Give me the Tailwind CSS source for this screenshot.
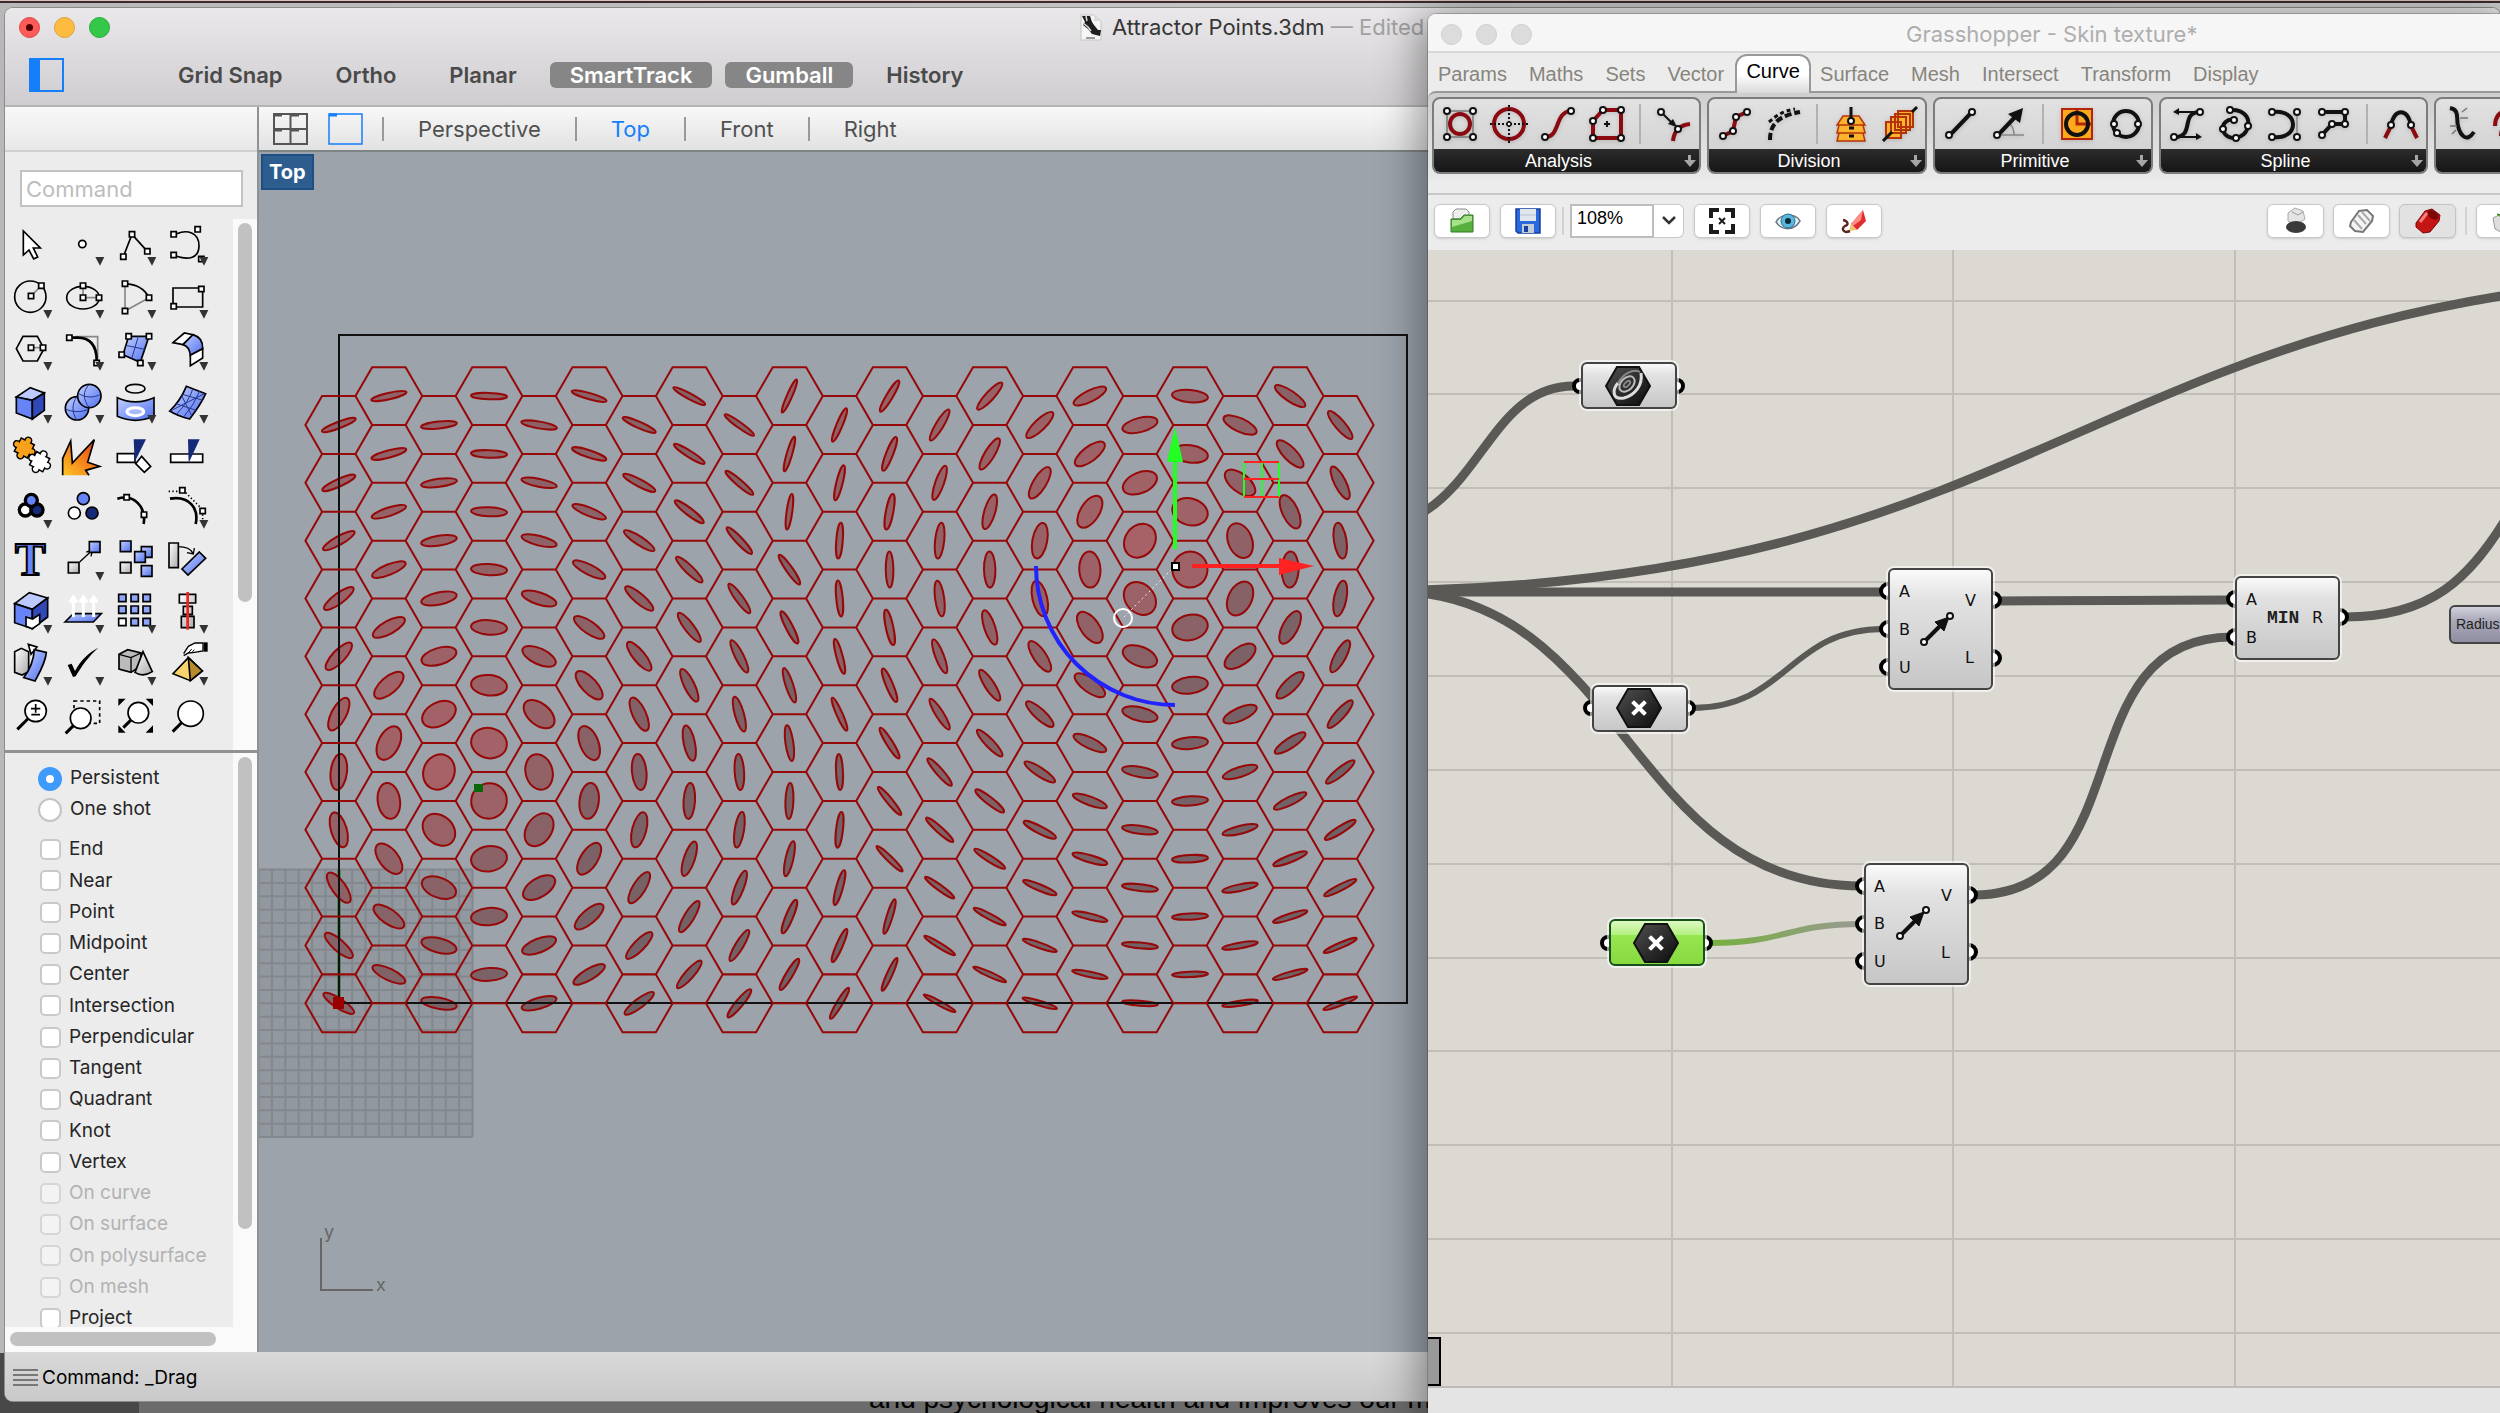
<!DOCTYPE html>
<html lang="en">
<head>
    <meta charset="UTF-8">
    <meta name="viewport" content="width=device-width, initial-scale=1.0">
    <title>Attractor Points.3dm</title>
    <script src="https://cdn.jsdelivr.net/npm/@tailwindcss/browser@4"></script>
</head>
<body class="relative h-screen overflow-hidden bg-[#666] font-['Inter',sans-serif] text-[#262626]">

    <!-- Shared gradients -->
    <svg class="absolute" width="0" height="0" aria-hidden="true">
        <defs>
            <linearGradient id="blue" x1="0" y1="0" x2="1" y2="1"><stop offset="0" stop-color="#c3d0ff"/><stop offset="1" stop-color="#4f70f0"/></linearGradient>
            <linearGradient id="grey" x1="0" y1="0" x2="1" y2="1"><stop offset="0" stop-color="#fff"/><stop offset="1" stop-color="#aaa"/></linearGradient>
            <linearGradient id="fire" x1="0" y1="1" x2="1" y2="0"><stop offset="0" stop-color="#ffc525"/><stop offset="1" stop-color="#e83a10"/></linearGradient>
            <linearGradient id="node" x1="0" y1="0" x2="0" y2="1"><stop offset="0" stop-color="#fbfbfb"/><stop offset=".25" stop-color="#e2e2e2"/><stop offset="1" stop-color="#c6c6c6"/></linearGradient>
            <linearGradient id="nodeGreen" x1="0" y1="0" x2="0" y2="1"><stop offset="0" stop-color="#e0fbc8"/><stop offset=".33" stop-color="#b4f080"/><stop offset=".34" stop-color="#96e650"/><stop offset="1" stop-color="#88d840"/></linearGradient>
            <linearGradient id="nodePurple" x1="0" y1="0" x2="0" y2="1"><stop offset="0" stop-color="#d4d3df"/><stop offset=".4" stop-color="#a9a8b8"/><stop offset="1" stop-color="#8f8ea2"/></linearGradient>
            <linearGradient id="wire" x1="1712" y1="0" x2="1860" y2="0" gradientUnits="userSpaceOnUse"><stop offset="0" stop-color="#76b03e"/><stop offset="1" stop-color="#999a93"/></linearGradient>
            <linearGradient id="hex" x1="0" y1="0" x2="1" y2="1"><stop offset="0" stop-color="#505050"/><stop offset="1" stop-color="#0c0c0c"/></linearGradient>
        </defs>
    </svg>

    <!-- Document behind -->
    <div class="absolute inset-0 flex flex-col justify-end bg-linear-to-r from-[#b8b8b8] to-[#d0d0d0]">
        <div class="absolute inset-x-0 top-0 h-[3px] border-b-2 border-[#3a2c2c] bg-[#dcc4bc]"></div>
        <div class="h-[60px] bg-[#484848] pl-[139px]">
            <p class="h-full overflow-hidden bg-[#6b6b6b] pt-[30px] pl-[730px] font-['Liberation_Sans',sans-serif] text-[28px] leading-8 whitespace-nowrap text-black">and psychological health and improves our mood</p>
        </div>
    </div>

    <!-- Rhino window -->
    <section class="absolute top-2 right-0 bottom-3 left-[5px] flex flex-col overflow-hidden rounded-lg bg-[#ececec] shadow-[0_0_0_1px_#8c8c8c]">
        <header class="flex h-[99px] shrink-0 flex-col border-b-2 border-[#b5b3b5] bg-linear-to-b from-[#eae8ea] to-[#cfcdcf]">
            <div class="flex h-[38px] items-center pl-[14px]">
                <div class="flex gap-[14px]">
                    <button aria-label="Close" class="flex size-[21px] items-center justify-center rounded-full border border-[#e0443e] bg-[#fc5b57]"><span class="size-[7px] rounded-full bg-[#4d0000]"></span></button>
                    <button aria-label="Minimise" class="size-[21px] rounded-full border border-[#dea033] bg-[#fdbc40]"></button>
                    <button aria-label="Zoom" class="size-[21px] rounded-full border border-[#27aa35] bg-[#34c84a]"></button>
                </div>
                <h1 class="ml-[970px] flex items-center gap-[10px] text-[22px] whitespace-nowrap text-[#363636]">
                    <svg class="h-[27px] w-[22px]" viewBox="0 0 22 27"><path d="M1 1h13l7 6v19H1z" fill="#f6f6f6" stroke="#c4c4c4"/><path d="M14 1l7 6h-7z" fill="#ddd"/><path d="M2 2h8l2 6 2 3 4 5 3 0-1 6-4-1-4-1-4-5-5-4 2-3z" fill="#1e1e1e"/><path d="M3 9l5 4 3 4M6 2l1 5" fill="none" stroke="#ddd" stroke-width="1.500"/><path d="M6 24h9" stroke="#999" stroke-width="2"/></svg>
                    <span>Attractor Points.3dm <span class="text-[#a3a1a3]">— Edited</span></span>
                </h1>
            </div>
            <div class="flex h-[58px] items-center pl-6">
                <button aria-label="Toggle sidebar" class="flex h-[34px] w-[35px] border-2 border-[#147efb]"><span class="h-full w-[9px] bg-[#147efb]"></span></button>
                <div class="ml-[94px] flex gap-[13px] text-[22px] leading-[26px] font-semibold text-[#4a4a4a]">
                    <button class="rounded-md px-5">Grid Snap</button>
                    <button class="rounded-md px-5">Ortho</button>
                    <button class="rounded-md px-5">Planar</button>
                    <button class="rounded-md bg-[#868686] px-5 text-white">SmartTrack</button>
                    <button class="rounded-md bg-[#868686] px-5 text-white">Gumball</button>
                    <button class="rounded-md px-5">History</button>
                </div>
            </div>
        </header>

        <div class="flex min-h-0 flex-1">
            <!-- Sidebar -->
            <aside class="flex w-[254px] shrink-0 flex-col border-r-2 border-[#8f9194]">
                <div class="h-[45px] shrink-0 border-b-2 border-[#d0d0d0] bg-linear-to-b from-[#f8f8f8] to-[#e8e8e8]"></div>
                <input type="text" aria-label="Command" placeholder="Command" class="mx-[15px] mt-[18px] mb-3 h-[37px] w-[223px] shrink-0 border-2 border-[#c2c2c2] bg-white px-1 text-[22px] placeholder:text-[#bdbdbd]">
                <div class="flex h-[534px] shrink-0 border-b-3 border-[#929292]">
                    <div id="tools" class="grid h-[525px] flex-1 grid-cols-[repeat(4,52px)] grid-rows-10 items-center pl-[2px]"></div>
                    <div class="w-6 bg-[#fafafa] px-[5px] py-1"><div class="h-[379px] rounded-full bg-[#c1c1c1]"></div></div>
                </div>
                <div class="flex min-h-0 flex-1">
                    <form class="flex-1 overflow-hidden pt-[10px] pl-[33px] text-[19px]">
                        <div class="grid h-[62px] grid-rows-2">
                            <label class="flex items-center gap-2"><input type="radio" name="mode" checked class="size-6 appearance-none rounded-full border-[8px] border-[#3f9bfb] bg-white">Persistent</label>
                            <label class="flex items-center gap-2"><input type="radio" name="mode" class="size-6 appearance-none rounded-full border-2 border-[#c4c4c4] bg-white">One shot</label>
                        </div>
                        <div id="snaps" class="mt-[9px] grid h-[500px] grid-rows-16 pl-[2px]"></div>
                    </form>
                    <div class="w-6 bg-[#fafafa] px-[5px] py-1"><div class="h-[472px] rounded-full bg-[#c1c1c1]"></div></div>
                </div>
                <div class="h-[25px] shrink-0 bg-[#fafafa] px-[5px] py-[5px]"><div class="h-[14px] w-[206px] rounded-full bg-[#c1c1c1]"></div></div>
            </aside>

            <!-- Viewport -->
            <main class="flex min-w-0 flex-1 flex-col">
                <nav class="flex h-[45px] shrink-0 items-center border-b-2 border-[#7f8486] bg-linear-to-b from-[#f8f8f8] to-[#e2e2e2] pl-[14px] text-[22px] text-[#505050]">
                    <button aria-label="Four views"><svg width="35" height="32" viewBox="0 0 35 32" fill="none" stroke="#555" stroke-width="2"><path d="M1 1h33v30H1zM17.500 1v30M1 16h33"/><path d="M1 2h8M18 2h8M1 17h8M18 17h8" stroke-width="3"/></svg></button>
                    <button aria-label="One view" class="ml-5"><svg width="35" height="32" viewBox="0 0 35 32" fill="none" stroke="#147efb" stroke-width="1.500"><path d="M1 1h33v30H1z"/><path d="M1 2h8" stroke-width="3"/></svg></button>
                    <div class="ml-[19px] flex items-center">
                        <button class="border-l-2 border-[#999] px-[34px] leading-6">Perspective</button>
                        <button class="border-l-2 border-[#999] px-[34px] leading-6 text-[#147efb]">Top</button>
                        <button class="border-l-2 border-[#999] px-[34px] leading-6">Front</button>
                        <button class="border-l-2 border-[#999] px-[34px] leading-6">Right</button>
                    </div>
                </nav>
                <div class="relative min-h-0 flex-1 bg-[#9ca3ab]">
                    <div class="absolute top-[2px] left-[2px] z-10 border-2 border-[#1d4f85] bg-[#2d5d8f] px-[6px] text-[20px] leading-8 font-bold text-white">Top</div>
                    <svg class="absolute inset-0 size-full overflow-hidden" fill="none">
                        <g transform="translate(-259 -152)">
                            <path d="M205 870h268v267H205z" fill="#92989f"/>
                            <path id="floor" stroke="#83888f" stroke-width="2"/>
                            <path d="M339 870v133" stroke="#1f7a1f" stroke-width="3"/>
                            <g id="ellipses" stroke="#970808" stroke-width="2"></g>
                            <path d="M339 335h1068v668H339z" stroke="#111" stroke-width="2"/>
                            <path id="hexes" stroke="#970808" stroke-width="2"/>
                            <path d="M333 997h11v12h-11z" fill="#900"/>
                            <path d="M474 784h9v8h-9z" fill="#086808"/>
                            <!-- Axes -->
                            <path d="M321 1238v52h52" stroke="#666" stroke-width="2"/>
                            <text x="324" y="1238" fill="#666" font-size="18">y</text>
                            <text x="376" y="1291" fill="#666" font-size="18">x</text>
                            <!-- Gumball -->
                            <path d="M1244 462v35M1262 462v35M1279 462v35" stroke="#2f2" stroke-width="2"/>
                            <path d="M1244 462h35M1244 479h35M1244 497h35" stroke="#f22" stroke-width="2"/>
                            <path d="M1036 566A139 139 0 0 0 1175 705" stroke="#22f" stroke-width="4"/>
                            <path d="M1175 549V440" stroke="#2f2" stroke-width="4"/><path d="M1175 427l8 35h-16z" fill="#2f2"/>
                            <path d="M1192 566h95" stroke="#f22" stroke-width="4"/><path d="M1314 566l-35-8v17z" fill="#f22"/>
                            <path d="M1175 566l-52 52" stroke="#eee" stroke-width="1" stroke-dasharray="2 3"/>
                            <circle cx="1123" cy="618" r="9" stroke="#fff" stroke-width="2"/>
                            <path d="M1172 563h7v7h-7z" fill="#fff" stroke="#000" stroke-width="2"/>
                        </g>
                    </svg>
                </div>
            </main>
        </div>
        <footer class="flex h-[49px] shrink-0 items-center gap-1 bg-linear-to-b from-[#d9d9d9] to-[#c9c9c9] pt-[3px] pl-2 text-[19px] text-black">
            <svg width="25" height="18" stroke="#777" stroke-width="2"><path d="M0 1h25M0 6h25M0 11h25M0 16h25"/></svg>
            Command: _Drag
        </footer>
    </section>

    <!-- Grasshopper window -->
    <section class="absolute top-[14px] right-0 bottom-0 left-[1428px] flex flex-col overflow-hidden rounded-tl-lg bg-[#ececec] font-['Liberation_Sans',sans-serif] shadow-[0_8px_44px_8px_rgba(0,0,0,0.4),0_0_0_1px_rgba(0,0,0,0.2)]">
        <header class="flex h-[39px] shrink-0 items-center border-b-2 border-[#d8d8d8] bg-[#f6f6f6] pt-[3px] pl-[13px]">
            <div class="flex gap-[14px]">
                <button aria-label="Close" class="size-[21px] rounded-full border border-[#cfcfcf] bg-[#dcdcdc]"></button>
                <button aria-label="Minimise" class="size-[21px] rounded-full border border-[#cfcfcf] bg-[#dcdcdc]"></button>
                <button aria-label="Zoom" class="size-[21px] rounded-full border border-[#cfcfcf] bg-[#dcdcdc]"></button>
            </div>
            <h2 class="ml-[374px] font-['Inter',sans-serif] text-[22px] whitespace-nowrap text-[#aeaeae]">Grasshopper - Skin texture*</h2>
        </header>
        <nav class="flex h-[38px] shrink-0 items-end pl-[10px] text-[20px] leading-[34px] text-[#87847c]">
            <button class="mr-[22px]">Params</button>
            <button class="mr-[22px]">Maths</button>
            <button class="mr-[22px]">Sets</button>
            <button class="mr-[11px]">Vector</button>
            <button class="relative z-10 -mb-[2px] h-[39px] w-[76px] rounded-t-xl border-2 border-b-0 border-[#999] bg-linear-to-b from-white from-50% to-[#dadada] pb-2 leading-6 text-black">Curve</button>
            <button class="mr-[22px] ml-[9px]">Surface</button>
            <button class="mr-[22px]">Mesh</button>
            <button class="mr-[22px]">Intersect</button>
            <button class="mr-[22px]">Transform</button>
            <button>Display</button>
        </nav>
        <div class="flex h-[104px] shrink-0 border-b-2 border-[#c8c8c8]">
            <div id="ribbon" class="flex h-[90px] flex-1 gap-[6px] rounded-tl-lg border-t-2 border-[#999] bg-linear-to-b from-[#cfcfcf] to-[#e9e9e9] pt-1 pl-1"></div>
        </div>
        <div class="flex h-[55px] shrink-0 items-center gap-[10px] pb-1 pl-[6px]">
            <button aria-label="Open" class="flex h-[34px] w-14 items-center justify-center rounded-md border border-[#c8c8c8] bg-white shadow-sm"><svg width="26" height="28" viewBox="0 0 26 28"><path d="M4 12V5l3-3h10l3 3v7z" fill="#eee" stroke="#888"/><path d="M2 12h9l4-4h9v17H2z" fill="#57b03c" stroke="#2f7a20"/><path d="M3 13h9l4-4h7v5L3 20z" fill="#a7e18c"/></svg></button>
            <button aria-label="Save" class="flex h-[34px] w-14 items-center justify-center rounded-md border border-[#c8c8c8] bg-white shadow-sm"><svg width="26" height="26" viewBox="0 0 26 26"><path d="M1 1h24v24H3l-2-2z" fill="#2b67dd" stroke="#123f9e" stroke-width="1.500"/><path d="M5 1h16v12H5z" fill="#dfe6ee"/><path d="M5 7h16" stroke="#b7c0cc"/><path d="M7 16h12v9H7z" fill="#c2cbd6"/><path d="M9 18h4v6H9z" fill="#16439f"/></svg></button>
            <div class="-mx-1 h-7 w-[2px] bg-[#d2d2d2]"></div>
            <div class="flex h-[34px]">
                <input type="text" aria-label="Zoom" value="108%" class="w-[84px] border-2 border-[#bdbdbd] bg-white pb-1 pl-[5px] text-[18px] text-black">
                <button aria-label="Zoom levels" class="flex w-[30px] items-center justify-center rounded-r-md border border-l-0 border-[#c8c8c8] bg-white"><svg width="14" height="9" fill="none" stroke="#333" stroke-width="2.500"><path d="M1 1l6 6 6-6"/></svg></button>
            </div>
            <button aria-label="Zoom extents" class="flex h-[34px] w-14 items-center justify-center rounded-md border border-[#c8c8c8] bg-white shadow-sm"><svg width="26" height="26" viewBox="0 0 26 26" fill="none" stroke="#1b1b1b" stroke-width="4"><path d="M2 10V2h8M16 2h8v8M24 16v8h-8M10 24H2v-8"/><path d="M10 10l6 6M16 10l-6 6" stroke-width="2"/></svg></button>
            <button aria-label="Named views" class="flex h-[34px] w-14 items-center justify-center rounded-md border border-[#c8c8c8] bg-white shadow-sm"><svg width="26" height="20" viewBox="0 0 26 20"><path d="M1 11C6 2 20 2 25 10 19 20 7 20 1 11z" fill="#e9f4f8" stroke="#6b7a80" stroke-width="1.500"/><circle cx="13" cy="10" r="7" fill="#59b6dc" stroke="#256f93"/><circle cx="13" cy="10" r="3" fill="#0a2836"/></svg></button>
            <button aria-label="Sketch" class="flex h-[34px] w-14 items-center justify-center rounded-md border border-[#c8c8c8] bg-white shadow-sm"><svg width="26" height="26" viewBox="0 0 26 26"><path d="M22 2l3 11-9 9-6-6z" fill="#e02c2c"/><path d="M22 2l-2 10-8 6-2-2z" fill="#ff8d88"/><path d="M10 16l6 6-8 1z" fill="#f3c070"/><path d="M9 23C2 26 0 20 4 18c4-1 3-5-2-6" fill="none" stroke="#5c2620" stroke-width="2.500"/></svg></button>
            <div class="-mr-[33px] ml-auto flex shrink-0 items-center gap-[9px]">
                <button aria-label="Wireframe preview" class="flex h-[34px] w-[57px] items-center justify-center rounded-md border border-[#c8c8c8] bg-white shadow-sm"><svg width="22" height="27" viewBox="0 0 22 27"><path d="M3 6l7-5 8 3 2 8-9 6-8-4z" fill="#e4e4e4" stroke="#aaa"/><path d="M7 5l6 3 5-3" fill="none" stroke="#999"/><ellipse cx="11" cy="20" rx="10" ry="6" fill="#3a3a3a"/></svg></button>
                <button aria-label="No preview" class="flex h-[34px] w-[57px] items-center justify-center rounded-md border border-[#c8c8c8] bg-white shadow-sm"><svg width="26" height="26" viewBox="0 0 26 26" fill="#f4f4f4" stroke="#777" stroke-width="2"><path d="M2 14L10 3l8-1 6 6-1 5-9 11-8-1-5-5z"/><path d="M9 7l8 9M13 4l8 9M5 12l8 9" stroke="#aaa"/></svg></button>
                <button aria-label="Shaded preview" class="flex h-[34px] w-[57px] items-center justify-center rounded-md border border-[#c4c4c4] bg-[#e2e2e2] shadow-sm"><svg width="26" height="26" viewBox="0 0 26 26"><path d="M1 15L10 3l7-2 8 6-1 6-9 11-7 1-7-6z" fill="#c51414" stroke="#7c0808"/><ellipse cx="18" cy="7" rx="6" ry="4" transform="rotate(35 18 7)" fill="#7c0808"/><path d="M5 14l7-9" stroke="#f28080" stroke-width="3"/></svg></button>
                <div class="h-7 w-[2px] bg-[#d2d2d2]"></div>
                <button aria-label="Preview selected" class="flex h-[34px] w-[57px] items-center justify-center rounded-md border border-[#c8c8c8] bg-white shadow-sm"><svg width="28" height="26" viewBox="0 0 28 26"><path d="M2 10l8-4 12 6-2 10-8 3-8-4z" fill="#ddd" stroke="#999"/><path d="M6 6l8 2 10-5-6 12z" fill="#84d334" stroke="#3f7d10"/></svg></button>
            </div>
        </div>

        <!-- Definition canvas -->
        <div class="relative min-h-0 flex-1 border-b-2 border-[#bdbcb8] bg-[#dcd9d2]">
            <svg class="absolute inset-0 size-full overflow-hidden" fill="none" aria-label="Definition">
                <g transform="translate(-1428 -250)">
                    <path d="M1672 240v1150M1953 240v1150M2235 240v1150M1428 301h1400M1428 394h1400M1428 488h1400M1428 582h1400M1428 676h1400M1428 770h1400M1428 864h1400M1428 958h1400M1428 1051h1400M1428 1145h1400M1428 1239h1400M1428 1333h1400" stroke="#c1beb8" stroke-width="2"/>

                    <!-- Wires -->
                    <g stroke="#5a5955" stroke-width="9">
                        <path d="M1364 528C1480 528 1480 386 1574 386"/>
                        <path d="M1355 591C2080 591 2080 273 2805 273"/>
                        <path d="M1400 592H1884"/>
                        <path d="M1390 591C1626 591 1626 886 1862 886"/>
                        <path d="M1998 601C2115 601 2115 600 2232 600"/>
                        <path d="M1974 895C2143 895 2063 637 2232 637"/>
                        <path d="M2345 617C2430 617 2470 580 2510 512"/>
                        <path d="M1692 708C1788 708 1788 629 1884 629" stroke-width="6"/>
                        <path d="M1710 943C1786 943 1786 924 1862 924" stroke="url(#wire)" stroke-width="6"/>
                    </g>

                    <!-- Grips -->
                    <g fill="#fff" stroke="#000" stroke-width="4">
                        <circle cx="1580" cy="386" r="6"/><circle cx="1677" cy="386" r="6"/>
                        <circle cx="1591" cy="708" r="6"/><circle cx="1688" cy="708" r="6"/>
                        <circle cx="1608" cy="943" r="6"/><circle cx="1705" cy="943" r="6"/>
                        <circle cx="1888" cy="591" r="7"/><circle cx="1888" cy="629" r="7"/><circle cx="1888" cy="667" r="7"/>
                        <circle cx="1993" cy="600" r="7"/><circle cx="1993" cy="658" r="7"/>
                        <circle cx="2235" cy="599" r="7"/><circle cx="2235" cy="637" r="7"/><circle cx="2340" cy="617" r="7"/>
                        <circle cx="1864" cy="886" r="7"/><circle cx="1864" cy="924" r="7"/><circle cx="1864" cy="961" r="7"/>
                        <circle cx="1969" cy="895" r="7"/><circle cx="1969" cy="952" r="7"/>
                    </g>

                    <!-- Bodies -->
                    <g stroke="#fff" stroke-opacity=".6" stroke-width="6">
                        <rect x="1582" y="363" width="94" height="45" rx="5"/><rect x="1593" y="686" width="94" height="45" rx="5"/><rect x="1610" y="920" width="94" height="45" rx="5"/>
                        <rect x="1889" y="569" width="103" height="120" rx="5"/><rect x="2236" y="577" width="103" height="82" rx="5"/><rect x="1865" y="864" width="103" height="120" rx="5"/>
                    </g>
                    <g fill="url(#node)" stroke="#444" stroke-width="2">
                        <rect x="1582" y="363" width="94" height="45" rx="5"/>
                        <rect x="1593" y="686" width="94" height="45" rx="5"/>
                        <rect x="1610" y="920" width="94" height="45" rx="5" fill="url(#nodeGreen)" stroke="#16501a"/>
                        <rect x="1889" y="569" width="103" height="120" rx="5"/>
                        <rect x="2236" y="577" width="103" height="82" rx="5"/>
                        <rect x="1865" y="864" width="103" height="120" rx="5"/>
                        <rect x="2450" y="606" width="120" height="37" rx="5" fill="url(#nodePurple)"/>
                        <path d="M1420 1338h20v47h-20z" fill="#999" stroke="#000"/>
                    </g>

                    <!-- Hexagon parameter icons -->
                    <g fill="url(#hex)" stroke="#111" stroke-width="2">
                        <path d="M1617 367h22l11 19-11 19h-22l-11-19z"/>
                        <path d="M1628 689h22l11 19-11 19h-22l-11-19z"/>
                        <path d="M1645 924h22l11 19-11 19h-22l-11-19z"/>
                    </g>
                    <g stroke="#ddd">
                        <path d="M1641 373c2 12-6 22-17 25-12 2-12-8-6-15" stroke-width="3"/>
                        <path d="M1618 383c5-9 15-15 22-11" stroke="#888" stroke-width="2"/>
                        <ellipse cx="1627" cy="384" rx="9" ry="6" transform="rotate(-45 1627 384)" stroke="#bbb" stroke-width="2"/>
                        <ellipse cx="1627" cy="384" rx="4" ry="2" transform="rotate(-45 1627 384)" stroke="#888" stroke-width="2"/>
                    </g>
                    <path d="M1634 703l10 10M1644 703l-10 10M1651 938l10 10M1661 938l-10 10" stroke="#fff" stroke-width="4" stroke-linecap="square"/>

                    <!-- Vector icons -->
                    <g stroke="#111" stroke-width="4">
                        <path d="M1925 641l17-17M1901 935l17-17"/>
                        <path d="M1949 617l-5 14-9-9zM1924 912l-5 14-9-9z" fill="#111" stroke-width="1"/>
                        <g fill="#fff" stroke-width="2"><circle cx="1924" cy="642" r="3"/><circle cx="1950" cy="616" r="3"/><circle cx="1900" cy="936" r="3"/><circle cx="1926" cy="910" r="3"/></g>
                    </g>

                    <g fill="#111" font-size="16" font-family="DejaVu Sans, sans-serif">
                        <text x="1899" y="597">A</text><text x="1899" y="635">B</text><text x="1899" y="673">U</text><text x="1965" y="606">V</text><text x="1965" y="663">L</text>
                        <text x="2246" y="605">A</text><text x="2246" y="643">B</text><text x="2312" y="623">R</text>
                        <text x="1874" y="892">A</text><text x="1874" y="929">B</text><text x="1874" y="967">U</text><text x="1941" y="901">V</text><text x="1941" y="958">L</text>
                    </g>
                    <text x="2267" y="623" fill="#222" font-size="18" font-weight="700" font-family="Liberation Mono, monospace">MIN</text>
                    <text x="2456" y="629" fill="#222" font-size="14" font-family="Liberation Sans, sans-serif">Radius</text>
                </g>
            </svg>
        </div>
        <footer class="h-[25px] shrink-0 bg-[#e4e4e4]"></footer>
    </section>

    <script>
        // Sidebar tool icons, drawn on a 156 x 156 box
        const sq = (x, y) => `<path d="M${x - 8} ${y - 8}h16v16h-16z" fill="#fff"/>`;
        const box = (x, y, s, f) => `<path d="M${x - s / 2} ${y - s / 2}h${s}v${s}h${-s}z" fill="${f}"/>`;
        const lens = (x, y, r, hx, hy) => `<path d="M${x - r * .7} ${y + r * .7}L${hx} ${hy}" stroke-width="9"/><circle cx="${x}" cy="${y}" r="${r}" fill="#fff"/>`;
        const piece = (x, y, f) => {
            const shape = `<path d="M${x - 20} ${y - 20}h40v40h-40z"/><circle cx="${x}" cy="${y - 25}" r="8"/><circle cx="${x - 25}" cy="${y}" r="8"/><circle cx="${x}" cy="${y + 25}" r="8"/><circle cx="${x + 25}" cy="${y}" r="8"/>`;
            return `<g transform="rotate(28 ${x} ${y})"><g stroke-width="9">${shape}</g><g fill="${f}" stroke="none">${shape}</g></g>`;
        };
        const tools = [
            ['Select', '<path d="M49 36v72l17-15 14 27 12-6-13-27h21z" fill="#fff"/>', 0],
            ['Point', '<circle cx="70" cy="75" r="11" fill="#fff"/>', 1],
            ['Polyline', '<path d="M37 113L63 46l46 51"/>' + sq(37, 113) + sq(63, 46) + sq(109, 97), 1],
            ['Curve', '<path d="M41 44C71 32 108 38 108 80s-37 42-67 32"/>' + sq(32, 46) + sq(104, 31) + sq(32, 108) + sq(115, 120), 1],
            ['Circle', '<circle cx="70" cy="74" r="47"/><path d="M72 72l31-31" stroke="#888"/>' + sq(72, 72) + sq(103, 41), 1],
            ['Ellipse', '<ellipse cx="72" cy="77" rx="49" ry="34"/><path d="M72 41v36h48" stroke="#888"/>' + sq(72, 41) + sq(72, 77) + sq(120, 77), 1],
            ['Arc', '<path d="M42 35v82l72-40" stroke="#888"/><path d="M42 35Q95 38 114 77"/>' + sq(42, 35) + sq(114, 77) + sq(42, 117), 1],
            ['Rectangle', '<path d="M30 48h89v57H30z"/>' + sq(115, 51) + sq(32, 103), 1],
            ['Polygon', '<path d="M48 37h43l20 37-20 37H48L28 74z"/><path d="M72 71h36" stroke="#888"/>' + sq(72, 71) + sq(108, 71), 1],
            ['Fillet', '<path d="M50 38h66v70" stroke="#888"/><path d="M40 41h15C95 41 113 66 113 110" stroke-width="8"/>' + sq(31, 41) + sq(113, 117), 1],
            ['Surface from points', '<path d="M53 37h61L88 115 36 92z" fill="url(#blue)"/><path d="M82 37L62 104M44 64l58 12" stroke="#24358c" stroke-width="3"/>' + sq(53, 37) + sq(114, 37) + sq(88, 117) + sq(32, 92), 1],
            ['Sweep', '<path d="M30 56l34-29 26 5-30 30z" fill="#fff"/><path d="M90 32c20 6 30 22 29 42L82 94C80 76 74 66 60 62z" fill="url(#blue)"/><path d="M119 74v28l-37 23V94z" fill="#fff"/>', 1],
            ['Box', '<path d="M28 60l42-28 42 16-36 22z" fill="#bccaff"/><path d="M28 60l48 10v56l-48-18z" fill="#6684f8"/><path d="M76 70l36-22v52l-36 26z" fill="#3048b8"/>', 1],
            ['Boolean union', '<circle cx="54" cy="94" r="35" fill="url(#blue)"/><circle cx="91" cy="57" r="35" fill="url(#blue)"/><path d="M91 22c-20 20-20 45 0 70M57 48c20 14 45 16 68 4M54 59c-16 20-16 50 0 70M20 96c20 10 45 10 66 2" stroke="#24358c" stroke-width="3"/>', 1],
            ['Project curve', '<ellipse cx="73" cy="35" rx="29" ry="13"/><path d="M19 62q54 25 110 0v56q-56 24-110 0z" fill="url(#blue)"/><ellipse cx="73" cy="104" rx="25" ry="12" fill="#a9bafa" stroke="#fff" stroke-width="9"/>', 1],
            ['Surface grid', '<path d="M70 28q30 12 58 22-14 32-48 76-34-8-60-24 32-30 50-74z" fill="url(#blue)"/><path d="M90 34Q78 74 40 112M110 42Q92 86 62 120M58 52l62 18M38 80l62 20M22 102L124 50M56 56l30 60" stroke="#24358c" stroke-width="3"/>', 1],
            ['Join', piece(52, 57, '#f9a11b') + piece(98, 98, '#fff'), 0],
            ['Explode', '<path d="M11 139V88l24-52 5 66 66-70-20 68 36 12-42 12 10 15" fill="url(#fire)"/>', 0],
            ['Trim', '<path d="M19 74h53v26H19zM74 104l18-22 27 30-19 18z" fill="#fff"/><path d="M68 31h37L71 99z" fill="#142a78" stroke="none"/>', 0],
            ['Split', '<path d="M23 75h96v25H23z" fill="#fff"/><path d="M75 31h35L77 102z" fill="#142a78" stroke="none"/>', 0],
            ['Group', '<g stroke-width="10"><circle cx="55" cy="84" r="18" fill="#fff"/><circle cx="90" cy="84" r="18" fill="#142a78"/><circle cx="73" cy="55" r="18" fill="#6684f8"/></g>', 1],
            ['Ungroup', '<circle cx="73" cy="50" r="18" fill="#6684f8"/><circle cx="46" cy="93" r="18" fill="#fff"/><circle cx="99" cy="93" r="18" fill="#142a78"/>', 0],
            ['Edit points', '<path d="M19 50C70 35 106 75 98 126" stroke-width="8"/>' + sq(47, 46) + sq(99, 98), 0],
            ['Control points', '<path d="M21 50C80 40 108 80 98 126" stroke-width="8"/><path d="M17 28h34M68 32l46 46M119 97v20" stroke-dasharray="4 7"/>' + sq(58, 25) + sq(119, 87), 1],
            ['Text', '<text x="24" y="122" font-family="Liberation Serif, serif" font-weight="700" font-size="138" fill="#6684f8" stroke-width="6">T</text>', 0],
            ['Move', '<path d="M62 84l36-34M82 54l18-5-4 18" stroke-width="4"/>' + box(44, 101, 32, 'url(#grey)') + box(107, 39, 32, 'url(#blue)'), 1],
            ['Copy', box(44, 37, 32, 'url(#blue)') + box(107, 54, 32, 'url(#blue)') + box(87, 69, 32, 'url(#blue)') + box(44, 101, 32, 'url(#grey)') + box(107, 111, 32, 'url(#blue)'), 0],
            ['Rotate', '<path d="M18 27h28v74H18z" fill="url(#grey)"/><path d="M109 54l19 19-53 50-18-18z" fill="url(#blue)"/><path d="M46 38q34 0 44 20M94 42l-3 18-19-4" stroke-width="4"/>', 0],
            ['Solid tools', '<path d="M23 50l44-33 55 16-46 34z" fill="#bccaff"/><path d="M23 50l53 17v58l-53-18z" fill="#6684f8"/><path d="M76 67l46-34v57l-46 35z" fill="#3048b8"/><path d="M57 90l20 6 21-14v28l-22 15-19-7z" fill="#fff"/>', 1],
            ['Extrude', '<path d="M18 105l25-25h84l-24 25z" fill="url(#blue)"/><path d="M43 90V34M73 90V34M104 90V34M32 46l11-16 11 16M62 46l11-16 11 16M93 46l11-16 11 16" stroke="#fff" stroke-width="9"/>', 1],
            ['Array', [33, 68, 105].map(y => [34, 71, 107].map(x => box(x, y, 22, x === 34 && y === 105 ? '#fff' : '#8ea6fa')).join('')).join(''), 1],
            ['Align', '<path d="M49 22h49v26H49zM61 58h27v24H61zM55 88h38v34H55z" fill="url(#grey)"/><path d="M74 15v113" stroke="#e22" stroke-width="8"/>', 1],
            ['Flow', '<path d="M23 38l20-10 22 10v60l-20 10-22-8z" fill="url(#grey)"/><path d="M64 16l26 8-18 22z" fill="#fff"/><path d="M82 32l36 8c-2 30-20 60-34 86l-34-10c20-26 30-50 32-84z" fill="url(#blue)"/>', 1],
            ['Check', '<path d="M26 78l12-4 10 22C66 62 90 40 118 26 90 50 66 84 50 112l-8 2z" fill="#000" stroke="none"/>', 1],
            ['Render', '<path d="M24 46l26-14 40 10v38l-30 20-36-10z" fill="#bbb"/><path d="M24 46l36 10 30-14M60 56v44" stroke-width="4"/><path d="M96 38L72 100q24 16 52-2z" fill="url(#grey)"/>', 1],
            ['Details', '<path d="M76 56l42 40-36 29-52-21z" fill="#f6d36c"/><path d="M76 56l6 69 36-29z" fill="#b98a2c"/><path d="M62 44l14-22 20-10h24v24l-26 4-18 2-14 8" fill="#fff" stroke-width="4"/><path d="M128 10v28" stroke-width="12"/><path d="M76 42l10-12M86 42l8-10" stroke-width="3"/>', 1],
            ['Zoom dynamic', lens(86, 57, 32, 31, 112) + '<path d="M72 50h28M86 36v26M73 68h26"/>', 0],
            ['Zoom window', '<path d="M45 27h77v67H45z" stroke-dasharray="10 9"/>' + lens(65, 79, 31, 20, 124), 0],
            ['Zoom extents', '<path d="M22 20h22L22 42zM126 20v22l-22-22zM126 122h-22l22-22zM22 122v-22l22 22z" fill="#000" stroke="none"/>' + lens(82, 62, 31, 37, 107), 0],
            ['Zoom selected', lens(83, 65, 38, 29, 119), 0],
        ];
        document.getElementById('tools').innerHTML = tools.map(([name, art, menu]) => `
            <button aria-label="${name}" class="size-[52px]"><svg class="size-full" viewBox="0 0 156 156" fill="none" stroke="#000" stroke-width="5">${art}${menu ? '<path d="M109 114h27l-13 26z" fill="#333" stroke="none"/>' : ''}</svg></button>`).join('');

        // Object snaps
        const snaps = ['End', 'Near', 'Point', 'Midpoint', 'Center', 'Intersection', 'Perpendicular', 'Tangent', 'Quadrant', 'Knot', 'Vertex', 'On curve', 'On surface', 'On polysurface', 'On mesh', 'Project'];
        document.getElementById('snaps').innerHTML = snaps.map(s => `
            <label class="flex items-center gap-2 whitespace-nowrap has-disabled:text-[#b2b2b2]"><input type="checkbox" ${s.startsWith('On ') ? 'disabled' : ''} class="size-[21px] shrink-0 appearance-none rounded-[5px] border-2 border-[#c9c9c9] bg-white disabled:border-[#d6d6d6] disabled:bg-[#f3f3f3]">${s}</label>`).join('');

        // Ribbon groups, icons on a 48 x 48 box, '|' is a divider
        const dot = (x, y) => `<circle cx="${x}" cy="${y}" r="3" fill="#fff" stroke="#111" stroke-width="2"/>`;
        const red = 'stroke="#8b0a0f"';
        const ribbon = [
            ['Analysis', [
                `<path d="M11 11h26v26H11z" stroke="#777" stroke-width="1.500"/><circle cx="24" cy="24" r="10" ${red}/>` + dot(11, 11) + dot(37, 11) + dot(11, 37) + dot(37, 37),
                `<circle cx="24" cy="24" r="15" ${red}/><path d="M5 24h38M24 5v38" stroke-width="2" stroke-dasharray="2 2"/><circle cx="24" cy="24" r="2" fill="#fff" stroke-width="1.500"/>`,
                `<path d="M11 37c16 0 9-25 26-26" ${red}/>` + dot(11, 37) + dot(37, 11),
                `<path d="M10 21l10-11h18v28H10z" ${red}/><path d="M24 21v6M21 24h6" stroke-width="2"/>` + dot(10, 21) + dot(20, 10) + dot(38, 10) + dot(38, 38) + dot(10, 38),
                '|',
                `<path d="M11 12l13 13" stroke-width="2"/><path d="M27 27l-9-3 5-5z" fill="#111" stroke="none"/><path d="M40 24c-10 1-16 7-17 17" ${red}/>` + dot(11, 12) + dot(28, 29)]],
            ['Division', [
                `<path d="M12 36l10-5 3-14 11-5" ${red}/>` + dot(12, 36) + dot(22, 31) + dot(25, 17) + dot(36, 12),
                '<path d="M10 40c0-16 8-24 30-28" stroke-dasharray="7 3"/><path d="M9 22c8-7 14-11 26-13" stroke-dasharray="4 3" stroke-width="3"/>',
                '|',
                '<g fill="#fdb32b" stroke="#b5330b" stroke-width="1.500"><path d="M12 33h24l2 8H10zM12 25h24l2 8H10zM16 16h16l6 9H10z"/></g><path d="M24 7v14M22 36h5M22 28h5" stroke-width="3"/>' + dot(24, 21),
                '<g fill="#fdb32b" stroke="#b5330b" stroke-width="2"><path d="M22 11h15v16H22zM19 14h15v16H19zM15 17h15v16H15zM10 22h15v16H10z"/></g><path d="M7 41l9-9M36 12l5-5" stroke-width="3"/>']],
            ['Primitive', [
                '<path d="M13 35l22-23"/>' + dot(12, 35) + dot(35, 12),
                '<path d="M12 35h26M28 35c0-5-1-8-4-11" stroke="#888" stroke-width="1.500"/><path d="M12 35l18-19"/><path d="M37 8l-3 15-12-9z" fill="#111" stroke="none"/>' + dot(11, 35),
                '|',
                '<path d="M9 9h30v30H9z" fill="#fca91e" stroke="#b5250b" stroke-width="2"/><path d="M24 9v15h15" stroke="#b5250b" stroke-width="3"/><circle cx="24" cy="24" r="11"/>',
                '<circle cx="24" cy="24" r="13"/>' + dot(12, 24) + dot(36, 24) + dot(15, 33)]],
            ['Spline', [
                '<path d="M37 12c-20 0-5 25-25 25"/><path d="M36 12H14M12 37h22" stroke-width="2"/><path d="M10 12l6-4v7zM39 37l-6-4v7z" fill="#111" stroke="none"/>' + dot(37, 12) + dot(11, 37),
                '<path d="M18 10c14-1 20 8 18 16-2 14-22 16-25 4-1-6 4-12 12-10"/>' + dot(18, 10) + dot(36, 26) + dot(24, 38) + dot(11, 29) + dot(22, 20),
                '<path d="M36 12v25" stroke="#888" stroke-width="1.500"/><path d="M11 12c28-4 28 29 0 25"/>' + dot(11, 12) + dot(36, 12) + dot(11, 37) + dot(36, 37),
                '<path d="M12 12h23v12H22L12 35"/>' + dot(12, 12) + dot(35, 12) + dot(35, 24) + dot(22, 24) + dot(12, 35),
                '|',
                `<path d="M14 25c4-17 16-17 20 0"/><path d="M14 26L8 38M34 26l6 12" ${red}/>` + dot(14, 25) + dot(34, 25)]],
            ['Util', [
                '<path d="M12 8c10 2 6 10 8 18s8 18 16 6"/><path d="M22 18h8M12 26h7M24 12l5-4M14 34l4-4" stroke="#777" stroke-width="1.500"/>',
                `<path d="M8 26c0-12 8-16 18-16" ${red}/><path d="M14 36c0-8 5-14 12-14" ${red}/>`,
                '|', '', '', '']],
        ];
        document.getElementById('ribbon').innerHTML = ribbon.map(([name, icons]) => `
            <div class="flex h-[77px] shrink-0 flex-col overflow-hidden rounded-lg border-2 border-[#7c7c7c] bg-linear-to-b from-[#e2e2e2] to-[#cdcdcd]">
                <div class="flex h-[50px] px-px">${icons.map(i => i === '|'
                    ? '<div class="flex w-[18px] items-center justify-center"><div class="h-10 w-[2px] bg-[#b2b2b2]"></div></div>'
                    : `<button class="flex w-[49px] items-center justify-center"><svg class="size-12 drop-shadow-sm" viewBox="0 0 48 48" fill="none" stroke="#111" stroke-width="4">${i}</svg></button>`).join('')}</div>
                <div class="flex flex-1 items-center bg-linear-to-b from-[#2c2c2c] to-[#161616] pr-[2px] text-[18px] leading-5 text-white">
                    <span class="flex-1 text-center">${name === 'Util' ? '' : name}</span>
                    <svg width="14" height="14" fill="#a5a5a5"><path d="M5 1h3v5h5l-6 7-6-7h4z"/></svg>
                </div>
            </div>`).join('');

        // Construction plane grid
        let floor = '';
        for (let i = 0; i <= 20; i++) {
            floor += `M${205.1 + i * 13.37} 869.6V1137M205 ${869.6 + i * 13.37}H472.5`;
        }
        document.getElementById('floor').setAttribute('d', floor);

        // Hexagon skin: every cell holds a disc tilted towards the closest attractor
        const attractors = [{ x: 478, y: 788, h: 71 }, { x: 1175, y: 566, h: 62 }];
        const side = 33.4, r = 18;
        let hexes = '', discs = '';
        for (let c = 0; c < 21; c++) {
            for (let k = 0; k < 11; k++) {
                const x = 338.8 + c * 50.07;
                const y = 1003.3 - k * 57.83 - (c % 2 ? 28.9 : 0);
                hexes += `M${x - side} ${y}l${side / 2} -28.9h${side}l${side / 2} 28.9l${-side / 2} 28.9h${-side}z`;

                const near = attractors.map(a => ({ ...a, d: Math.hypot(x - a.x, y - a.y) })).sort((a, b) => a.d - b.d)[0];
                const dx = (x - near.x) / near.d, dy = (y - near.y) / near.d;
                const cos = near.h / Math.hypot(near.h, near.d);
                const sin = Math.sqrt(1 - cos * cos);
                const shade = Math.round(121 + 42 * cos - 14 * sin * (dx + dy));
                const angle = Math.atan2(dy, dx) * 180 / Math.PI;
                discs += `<ellipse cx="${x}" cy="${y}" rx="${r * cos}" ry="${r}" transform="rotate(${angle} ${x} ${y})" fill="rgb(${shade} 98 103)"/>`;
            }
        }
        document.getElementById('hexes').setAttribute('d', hexes);
        document.getElementById('ellipses').innerHTML = discs;
    </script>
</body>
</html>
